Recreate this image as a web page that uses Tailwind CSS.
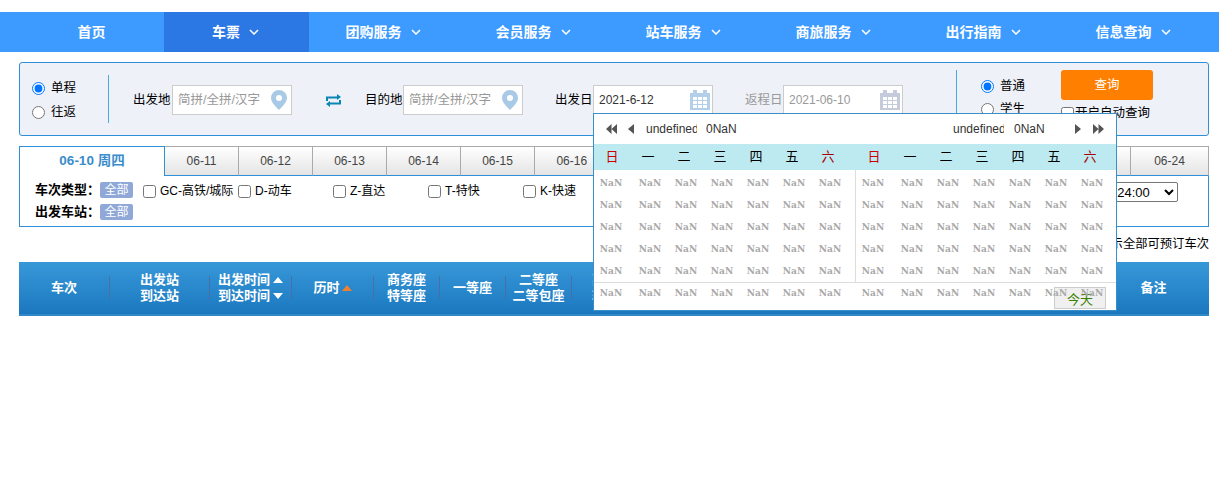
<!DOCTYPE html>
<html lang="zh-CN">
<head>
  <meta charset="UTF-8">
  <title>车票</title>
  <script src="https://cdn.jsdelivr.net/npm/@tailwindcss/browser@4"></script>
</head>
<body class="bg-white text-[12px] text-black font-['Liberation_Sans','Noto_Sans_CJK_SC',sans-serif] overflow-hidden h-[478px] relative">

  <!-- nav -->
  <nav class="mt-[12px] h-[40px] bg-[#3d9bff] pl-[19px] flex text-white text-[14px] font-bold">
    <a class="w-[145px] flex items-center justify-center">首页</a>
    <a class="w-[145px] flex items-center justify-center gap-[9px] pr-[2px] bg-[#2b78e4]">车票<svg class="w-[10px] h-[6px]" viewBox="0 0 10 6" fill="none" stroke="white" stroke-width="1.5"><path d="M1 1l4 4 4-4"/></svg></a>
    <a class="w-[150px] flex items-center justify-center gap-[9px] pr-[2px]">团购服务<svg class="w-[10px] h-[6px]" viewBox="0 0 10 6" fill="none" stroke="white" stroke-width="1.5"><path d="M1 1l4 4 4-4"/></svg></a>
    <a class="w-[150px] flex items-center justify-center gap-[9px] pr-[2px]">会员服务<svg class="w-[10px] h-[6px]" viewBox="0 0 10 6" fill="none" stroke="white" stroke-width="1.5"><path d="M1 1l4 4 4-4"/></svg></a>
    <a class="w-[150px] flex items-center justify-center gap-[9px] pr-[2px]">站车服务<svg class="w-[10px] h-[6px]" viewBox="0 0 10 6" fill="none" stroke="white" stroke-width="1.5"><path d="M1 1l4 4 4-4"/></svg></a>
    <a class="w-[150px] flex items-center justify-center gap-[9px] pr-[2px]">商旅服务<svg class="w-[10px] h-[6px]" viewBox="0 0 10 6" fill="none" stroke="white" stroke-width="1.5"><path d="M1 1l4 4 4-4"/></svg></a>
    <a class="w-[150px] flex items-center justify-center gap-[9px] pr-[2px]">出行指南<svg class="w-[10px] h-[6px]" viewBox="0 0 10 6" fill="none" stroke="white" stroke-width="1.5"><path d="M1 1l4 4 4-4"/></svg></a>
    <a class="w-[150px] flex items-center justify-center gap-[9px] pr-[2px]">信息查询<svg class="w-[10px] h-[6px]" viewBox="0 0 10 6" fill="none" stroke="white" stroke-width="1.5"><path d="M1 1l4 4 4-4"/></svg></a>
  </nav>

  <div class="ml-[19px] w-[1190px]">
    <!-- search panel -->
    <div class="mt-[10px] h-[74px] bg-[#eef1f8] border border-[#2f8fd8] rounded-[3px] flex items-start text-[12.5px]">
      <div class="mt-[12px] w-[89px] h-[48px] border-r border-[#4ea8de] pl-[12px] flex flex-col justify-between">
        <label class="flex items-center gap-[6px] h-[20px] mt-[3px]"><input type="radio" name="trip" checked class="m-0">单程</label>
        <label class="flex items-center gap-[6px] h-[20px] mb-[1px]"><input type="radio" name="trip" class="m-0">往返</label>
      </div>

      <div class="mt-[22px] ml-[24px] flex items-center h-[30px] whitespace-nowrap">
        <span class="w-[39px]">出发地</span>
        <div class="w-[120px] h-[30px] bg-white border border-[#cccccc] flex items-center justify-between pl-[5px] pr-[4px] text-[#999999]">
          简拼/全拼/汉字
          <svg class="w-[16px] h-[20px]" viewBox="0 0 16 20"><path fill="#a9cae6" fill-rule="evenodd" d="M8 0a8 8 0 0 1 8 8c0 4-4 8-8 12C4 16 0 12 0 8a8 8 0 0 1 8-8zm0 5a3 3 0 1 0 0 6 3 3 0 0 0 0-6z"/></svg>
        </div>
        <svg class="w-[17px] h-[13px] ml-[33px]" viewBox="0 0 17 13"><path fill="#0a86b5" d="M12 0l4 3-4 3V4.500H3V7H1V2.500h11zM5 13l-4-3 4-3v1.500h9V6h2v4.500H5z"/></svg>
        <span class="w-[38px] ml-[23px]">目的地</span>
        <div class="w-[120px] h-[30px] bg-white border border-[#cccccc] flex items-center justify-between pl-[5px] pr-[4px] text-[#999999]">
          简拼/全拼/汉字
          <svg class="w-[16px] h-[20px]" viewBox="0 0 16 20"><path fill="#a9cae6" fill-rule="evenodd" d="M8 0a8 8 0 0 1 8 8c0 4-4 8-8 12C4 16 0 12 0 8a8 8 0 0 1 8-8zm0 5a3 3 0 1 0 0 6 3 3 0 0 0 0-6z"/></svg>
        </div>
        <span class="w-[38px] ml-[32px]">出发日</span>
        <div class="w-[120px] h-[30px] bg-white border border-[#cccccc] flex items-center justify-between pl-[5px] pr-[2px] text-[12px] text-[#333333]">
          2021-6-12
          <svg class="w-[20px] h-[20px]" viewBox="0 0 20 20"><path fill="#b3cfe9" d="M0 3h3V0h4v3h6V0h4v3h3v17H0z"/><path fill="white" d="M3 7h4v3H3zM8 7h4v3H8zM13 7h4v3h-4zM3 11h4v3H3zM8 11h4v3H8zM13 11h4v3h-4zM3 15h4v3H3zM8 15h4v3H8zM13 15h4v3h-4z"/></svg>
        </div>
        <span class="w-[38px] ml-[32px] text-[#999999]">返程日</span>
        <div class="w-[120px] h-[30px] bg-white border border-[#cccccc] flex items-center justify-between pl-[5px] pr-[2px] text-[12px] text-[#999999]">
          2021-06-10
          <svg class="w-[20px] h-[20px]" viewBox="0 0 20 20"><path fill="#c5cbda" d="M0 3h3V0h4v3h6V0h4v3h3v17H0z"/><path fill="white" d="M3 7h4v3H3zM8 7h4v3H8zM13 7h4v3h-4zM3 11h4v3H3zM8 11h4v3H8zM13 11h4v3h-4zM3 15h4v3H3zM8 15h4v3H8zM13 15h4v3h-4z"/></svg>
        </div>
      </div>

      <div class="mt-[7px] ml-[53px] h-[58px] w-[1px] bg-[#4ea8de]"></div>
      <div class="mt-[13px] ml-[24px] w-[80px] flex flex-col gap-[3px]">
        <label class="flex items-center gap-[6px] h-[20px]"><input type="radio" name="kind" checked class="m-0">普通</label>
        <label class="flex items-center gap-[6px] h-[20px]"><input type="radio" name="kind" class="m-0">学生</label>
      </div>
      <div class="mt-[7px] flex flex-col">
        <button class="w-[92px] h-[30px] bg-[#ff8000] rounded-[3px] text-white pt-[1px]">查询</button>
        <label class="flex items-center h-[20px] mt-[3px] whitespace-nowrap"><input type="checkbox" class="m-0 mr-[1px]">开启自动查询</label>
      </div>
    </div>

    <!-- dates and filters -->
    <div class="mt-[10px] h-[81px] border border-[#2f8fd8] bg-white">
      <div class="flex h-[30px] -mt-[1px] -ml-[1px] -mr-[1px]">
        <div class="w-[146px] border-t border-l border-r border-[#2f8fd8] bg-white flex items-center justify-center text-[13.5px] font-bold text-[#3a8ccc]">06-10 周四</div>
        <div id="tabs" class="flex flex-1 text-[#444444]"></div>
      </div>
      <div class="pl-[15px] pt-[6px] flex items-start h-[28px]">
        <b class="w-[65px] text-[13px] leading-[16px] whitespace-nowrap">车次类型：</b>
        <span class="w-[33px] h-[16px] bg-[#8fa8d8] rounded-[2px] text-white flex items-center justify-center">全部</span>
        <div class="flex ml-[10px] h-[18px]">
          <label class="flex items-center gap-[4px] w-[95px]"><input type="checkbox" class="m-0">GC-高铁/城际</label>
          <label class="flex items-center gap-[4px] w-[95px]"><input type="checkbox" class="m-0">D-动车</label>
          <label class="flex items-center gap-[4px] w-[95px]"><input type="checkbox" class="m-0">Z-直达</label>
          <label class="flex items-center gap-[4px] w-[95px]"><input type="checkbox" class="m-0">T-特快</label>
          <label class="flex items-center gap-[4px] w-[95px]"><input type="checkbox" class="m-0">K-快速</label>
        </div>
        <select class="ml-auto mr-[30px] h-[20px] pr-[11px] text-[13px] border border-[#777777] rounded-[2px] bg-white"><option>00:00--24:00</option></select>
      </div>
      <div class="pl-[15px] flex items-center h-[16px]">
        <b class="w-[65px] text-[13px] whitespace-nowrap">出发车站：</b>
        <span class="w-[33px] h-[16px] bg-[#8fa8d8] rounded-[2px] text-white flex items-center justify-center">全部</span>
      </div>
    </div>

    <!-- summary line -->
    <div class="h-[35px] flex items-center justify-end text-[12.3px]">显示全部可预订车次</div>

    <!-- table head -->
    <div class="h-[54px] bg-gradient-to-b from-[#3798d8] to-[#1b78c0] border-b-2 border-[#3088c8] flex items-center text-[13px] text-white font-bold leading-[16px] text-center">
      <div class="w-[91px] h-[24px] flex items-center justify-center border-r border-[#4a6fa8]">车次</div>
      <div class="w-[100px] h-[24px] flex flex-col items-center justify-center border-r border-[#4a6fa8]"><span>出发站</span><span>到达站</span></div>
      <div class="w-[82px] h-[24px] flex flex-col items-center justify-center border-r border-[#4a6fa8]">
        <span class="flex items-center gap-[3px]">出发时间<i class="w-0 h-0 border-x-[5px] border-x-transparent border-b-[6px] border-b-white"></i></span>
        <span class="flex items-center gap-[3px]">到达时间<i class="w-0 h-0 border-x-[5px] border-x-transparent border-t-[6px] border-t-white"></i></span>
      </div>
      <div class="w-[82px] h-[24px] flex items-center justify-center gap-[2px] border-r border-[#4a6fa8]">历时<i class="w-0 h-0 border-x-[5px] border-x-transparent border-b-[6px] border-b-[#f08030]"></i></div>
      <div class="w-[66px] h-[24px] flex flex-col items-center justify-center border-r border-[#4a6fa8]"><span>商务座</span><span>特等座</span></div>
      <div class="w-[66px] h-[24px] flex items-center justify-center border-r border-[#4a6fa8]">一等座</div>
      <div class="w-[66px] h-[24px] flex flex-col items-center justify-center border-r border-[#4a6fa8]"><span>二等座</span><span>二等包座</span></div>
      <div class="w-[528px] h-[24px] flex items-center">
        <div class="w-[66px] flex flex-col items-center"><span>高级</span><span>软卧</span></div>
      </div>
      <div class="flex-1 flex items-center justify-center pr-[2px]">备注</div>
    </div>
  </div>

  <!-- date picker popup -->
  <div class="absolute left-[593px] top-[113px] w-[524px] h-[198px] bg-white border border-[#3a8fc8] z-10 flex flex-col text-[13px]">
    <div class="h-[30px] flex items-center text-[12px] text-[#333333]">
      <div class="w-[262px] flex items-center">
        <svg class="ml-[12px] w-[11px] h-[10px]" viewBox="0 0 11 10" fill="#555555"><path d="M5.500 0v10L0 5zM11 0v10L5.500 5z"/></svg>
        <svg class="ml-[11px] w-[6px] h-[10px]" viewBox="0 0 6 10" fill="#555555"><path d="M6 0v10L0 5z"/></svg>
        <span class="ml-[12px] w-[51px] overflow-hidden whitespace-nowrap">undefined</span>
        <span class="ml-[9px]">0NaN</span>
      </div>
      <div class="flex-1 flex items-center">
        <span class="ml-[97px] w-[51px] overflow-hidden whitespace-nowrap">undefined</span>
        <span class="ml-[10px]">0NaN</span>
        <svg class="ml-[30px] w-[6px] h-[10px]" viewBox="0 0 6 10" fill="#555555"><path d="M0 0v10l6-5z"/></svg>
        <svg class="ml-[12px] w-[11px] h-[10px]" viewBox="0 0 11 10" fill="#555555"><path d="M0 0v10l5.500-5zM5.500 0v10L11 5z"/></svg>
      </div>
    </div>
    <div class="h-[26px] bg-[#bdeaf0] flex items-center">
      <div class="week w-[262px] grid grid-cols-[repeat(7,36px)] text-center"></div>
      <div class="week flex-1 grid grid-cols-[repeat(7,36px)] text-center"></div>
    </div>
    <div class="h-[112px] flex">
      <div class="days w-[262px] border-r border-[#dddddd] grid grid-cols-[38px_repeat(6,36px)] auto-rows-[22px] items-center text-center pt-[2px]"></div>
      <div class="days flex-1 grid grid-cols-[38px_repeat(6,36px)] auto-rows-[22px] items-center text-center pt-[2px]"></div>
    </div>
    <div class="relative flex-1 border-t border-[#dddddd]">
      <button class="absolute right-[10px] top-[4px] w-[52px] h-[22px] bg-[#f0f0f0] border border-[#cccccc] text-[#3a8000] pt-[2px]">今天</button>
      <div class="relative flex h-[20px] items-center">
        <div class="last w-[262px] grid grid-cols-[38px_repeat(6,36px)] text-center"></div>
        <div class="last flex-1 grid grid-cols-[38px_repeat(6,36px)] text-center"></div>
      </div>
    </div>
  </div>

  <script>
    // date tabs
    const tabs = document.getElementById("tabs");
    for (let d = 11; d <= 24; d++) {
      const w = d <= 15 ? "w-[74px]" : d < 24 ? "w-[74.5px]" : "flex-1";
      tabs.innerHTML += `<div class="${w} border border-[#aaaaaa] border-l-0 border-b-[#2f8fd8] bg-gradient-to-b from-white to-[#e4e4e4] flex items-center justify-center">06-${d}</div>`;
    }

    // calendar cells
    const names = ["日", "一", "二", "三", "四", "五", "六"];
    document.querySelectorAll(".week").forEach(el => {
      names.forEach((n, i) => {
        const color = i === 0 ? "text-[#cc0000]" : i === 6 ? "text-[#aa0000]" : "text-black";
        el.innerHTML += `<span class="${color}">${n}</span>`;
      });
    });
    const nan = i => `<span class="font-['DejaVu_Serif'] font-bold text-[9px] leading-none text-[#a8a8a8] ${i === 0 ? "pr-[4px]" : ""}">NaN</span>`;
    document.querySelectorAll(".days").forEach(el => {
      for (let i = 0; i < 35; i++) el.innerHTML += nan(i % 7);
    });
    document.querySelectorAll(".last").forEach(el => {
      for (let i = 0; i < 7; i++) el.innerHTML += nan(i);
    });
  </script>
</body>
</html>
